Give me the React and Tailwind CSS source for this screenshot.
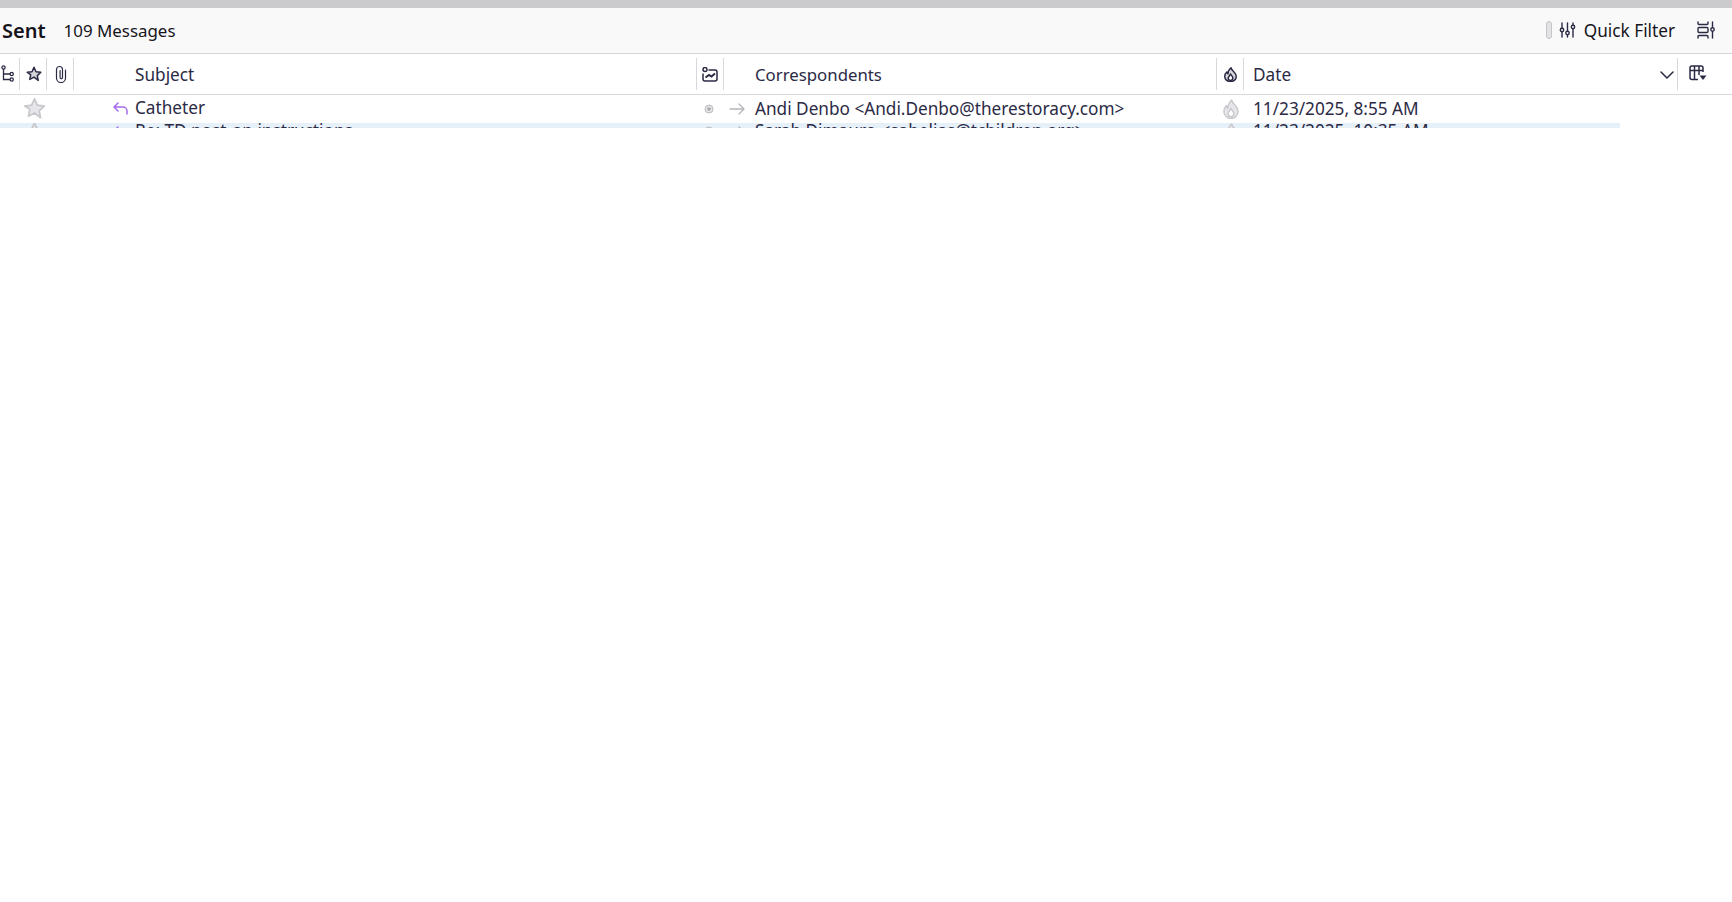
const Sep = () => <div className="w-px h-[32px] bg-[#d8d8dc] shrink-0" />;
const ink = "#2b2a45";

const Thread = () => (
  <svg width="13" height="18" viewBox="0 0 13 18" fill="none" stroke={ink} strokeWidth="1.3"><circle cx="2.500" cy="2.500" r="1.600"/><path d="M2.500 4.100V14.500H9M2.500 9H9"/><circle cx="10.700" cy="9" r="1.600"/><circle cx="10.700" cy="14.500" r="1.600"/></svg>
);
const Star = ({fill="#d5d5da", stroke=ink, size=16, sw=1.5}) => (
  <svg width={size} height={size} viewBox="0 0 16 16" fill={fill} stroke={stroke} strokeWidth={sw} strokeLinejoin="round"><path d="M8 1.300l2 4.400 4.800.6-3.500 3.300.9 4.800L8 11.100l-4.200 2.300.9-4.800L1.200 6.300 6 5.700z"/></svg>
);
const Clip = () => (
  <svg width="12" height="18" viewBox="0 0 12 18" fill="none" stroke={ink} strokeWidth="1.200" strokeLinecap="round"><path d="M10.500 5v8a4.500 4.500 0 0 1-9 0V4.500a3 3 0 0 1 6 0v8a1.200 1.200 0 0 1-2.400 0V5.500"/></svg>
);
const Junk = () => (
  <svg width="16" height="15" viewBox="0 0 16 15" fill="none" stroke={ink} strokeWidth="1.500"><circle cx="3" cy="2.500" r="2"/><path d="M6.500 3H13a2 2 0 0 1 2 2v7a2 2 0 0 1-2 2H3a2 2 0 0 1-2-2V6.500"/><path d="M3.500 10.500L7 8l2.500 1.500L13 6.500" strokeWidth="2"/></svg>
);
const Flame = ({c=ink, fill="#d5d5da", sw=1.6, w=14, h=16}) => (
  <svg width={w} height={h} viewBox="0 0 14 16" preserveAspectRatio="none" fill={fill} stroke={c} strokeWidth={sw} strokeLinejoin="round"><path d="M7.500.8C8 3 9.500 3.800 11 5.500 12.500 7 13.200 8.500 13.200 10A6.200 5.600 0 0 1 .8 10C.8 8 1.800 6.300 3 5.300 3.200 6.300 3.600 7 4.300 7.300 4.300 4.800 5.500 2.500 7.500.8Z"/><path d="M7 7.500C7.500 9 9.500 9.800 9.500 11.800A2.500 2.500 0 0 1 4.500 11.800C4.500 10 6.500 9.300 7 7.500Z" fill="#fff"/></svg>
);
const Sliders = () => (
  <svg width="17" height="16" viewBox="0 0 17 16" fill="none" stroke={ink} strokeWidth="1.400" strokeLinecap="round"><path d="M3 1v5M3 10v5M8.500 1v8M8.500 13v2M14 1v2M14 7v8"/><circle cx="3" cy="8" r="1.700"/><circle cx="8.500" cy="11" r="1.700"/><circle cx="14" cy="5" r="1.700"/></svg>
);
const Layout = () => (
  <svg width="18" height="18" viewBox="0 0 18 18" fill="none" stroke={ink} strokeWidth="1.400" strokeLinecap="round"><path d="M1 1v1.500a1 1 0 0 0 1 1h8a1 1 0 0 0 1-1V1M1 17v-1.500a1 1 0 0 1 1-1h8a1 1 0 0 1 1 1V17"/><rect x="1" y="6.500" width="10" height="5" rx="1"/><path d="M15.500 1v5M15.500 11v6"/><circle cx="15.500" cy="8.500" r="1.700"/></svg>
);
const TablePick = () => (
  <svg width="18" height="16" viewBox="0 0 18 16" fill="none" stroke={ink} strokeWidth="1.500"><path d="M9 14.500H3a2 2 0 0 1-2-2V3a2 2 0 0 1 2-2h9a2 2 0 0 1 2 2v4M1 5.500h13M5.500 1v13.500M10 1v9"/><path d="M10.500 10.500h7l-3.500 4.500z" fill={ink} stroke="none"/></svg>
);
const Reply = () => (
  <svg width="15" height="13" viewBox="0 0 15 13" fill="none" stroke="#a56bea" strokeWidth="1.500" strokeLinecap="round" strokeLinejoin="round"><path d="M5 1L1 5l4 4M1 5h9a4 4 0 0 1 4 4v3"/></svg>
);
const Dot = () => (
  <svg width="10" height="10" viewBox="0 0 10 10"><circle cx="5" cy="5" r="4" fill="#e4e4e7" stroke="#bcbcc0" strokeWidth="1"/><circle cx="5" cy="5" r="1.800" fill="#a8a8ae"/></svg>
);
const Arrow = () => (
  <svg width="16" height="12" viewBox="0 0 16 12" fill="none" stroke="#b5b5ba" strokeWidth="1.300" strokeLinecap="round" strokeLinejoin="round"><path d="M1 6h14M10 1l5 5-5 5"/></svg>
);

const Row = ({ className, subject, who, date, subjectShift = "", starShift = "", flameShift = "" }) => (
  <div className={`flex items-center overflow-hidden ${className}`}>
    <div className="w-[22px] shrink-0" />
    <div className={`w-[24px] shrink-0 flex justify-center ${starShift}`}><Star fill="#e6e6ea" stroke="#c8c8cc" size={23} sw={1.200} /></div>
    <div className="w-[66px] shrink-0" />
    <div className="w-[16px] shrink-0 flex justify-center"><Reply /></div>
    <div className={`ml-[7px] w-[569px] shrink-0 ${subjectShift}`}>{subject}</div>
    <div className="w-[10px] shrink-0 flex justify-center"><Dot /></div>
    <div className="ml-[15px] w-[16px] shrink-0 flex"><Arrow /></div>
    <div className="ml-[10px] w-[467px] shrink-0">{who}</div>
    <div className={`w-[17px] shrink-0 flex justify-center ${flameShift}`}><Flame c="#c8c8cc" fill="#e6e6ea" sw={1.200} w={16} h={20} /></div>
    <div className="ml-[14px] shrink-0">{date}</div>
  </div>
);

export default function App() {
  return (
    <div className="w-[1732px] h-[902px] bg-white overflow-hidden text-[#2b2a45] text-[17.2px]" style={{ fontFamily: '"Noto Sans", "Open Sans", sans-serif' }}>
      <div className="h-2 bg-[#cbcbce]" />
      <div className="h-[46px] bg-[#f9f9fa] border-b border-[#d5d5d8] flex items-center text-[#15141a]">
        <span className="ml-[2px] font-semibold text-[20px]">Sent</span>
        <span className="ml-[18px] text-[16.900px]">109 Messages</span>
        <div className="ml-auto flex items-center">
          <div className="w-[6px] h-[18px] rounded-[3px] bg-[#e2e2e5] border border-[#c6c6ca]" />
          <div className="ml-[7px] flex"><Sliders /></div>
          <span className="ml-[8px]">Quick Filter</span>
          <div className="ml-[22px] mr-[17px] flex"><Layout /></div>
        </div>
      </div>
      <div className="h-[41px] border-b border-[#d8d8dc] flex items-center">
        <div className="w-[19px] overflow-hidden flex justify-start pl-px"><Thread /></div>
        <Sep />
        <div className="w-[26px] flex justify-center pl-px"><Star /></div>
        <Sep />
        <div className="w-[26px] flex justify-center pl-[2px]"><Clip /></div>
        <Sep />
        <div className="w-[622px] pl-[61px] pt-[2px]">Subject</div>
        <Sep />
        <div className="w-[26px] flex justify-center"><Junk /></div>
        <Sep />
        <div className="w-[492px] pl-[31px] pt-[2px] text-[16.800px]">Correspondents</div>
        <Sep />
        <div className="w-[26px] flex justify-center pl-px"><Flame w={13} h={15} /></div>
        <Sep />
        <div className="w-[433px] pl-[9px] pr-[3px] pt-[2px] flex items-center justify-between">
          <span>Date</span>
          <svg width="14" height="8" viewBox="0 0 14 8" fill="none" stroke={ink} strokeWidth="1.500" strokeLinecap="round" strokeLinejoin="round"><path d="M1 1l6 6 6-6"/></svg>
        </div>
        <Sep />
        <div className="ml-[11px] flex -translate-y-px"><TablePick /></div>
      </div>
      <Row className="h-[28px] pb-[1px]" subjectShift="-translate-y-px" subject="Catheter" who={"Andi Denbo <Andi.Denbo@therestoracy.com>"} date="11/23/2025, 8:55 AM" />
      <Row className="h-[5px] w-[1620px] bg-[#e6f0f9] !items-start leading-[10px] pt-[3px] [&>div]:h-[20px]" starShift="-mt-[5px]" flameShift="-mt-[3px]" subject="Re: TD post-op instructions" who={"Sarah Dimauro <sahelias@tchildren.org>"} date="11/23/2025, 10:35 AM" />
    </div>
  );
}
